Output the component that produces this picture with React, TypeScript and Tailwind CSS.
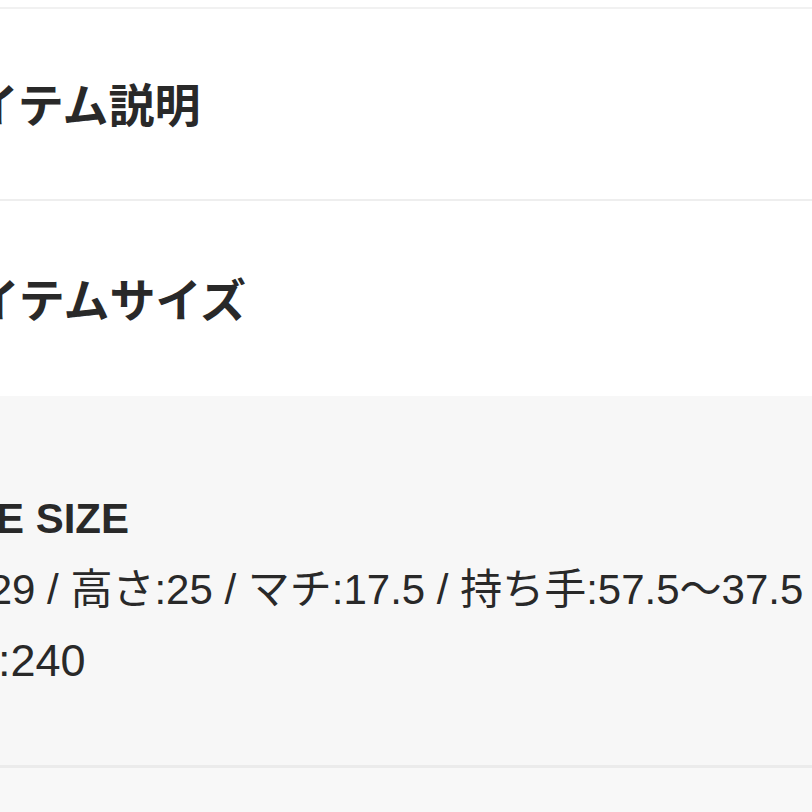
import React from "react";

export default function App() {
  const font = {
    fontFamily: '"Liberation Sans", "Noto Sans CJK JP", sans-serif',
  };
  return (
    <div
      className="w-[812px] h-[812px] overflow-hidden bg-white text-[#292929]"
      style={font}
    >
      <div className="h-[7px] bg-white" />
      <div className="h-[2px] bg-[#f1f1f1]" />
      <section className="h-[190px] flex items-center whitespace-nowrap pt-[4px]">
        <h2 className="ml-[-71px] text-[46px] font-bold leading-none">アイテム説明</h2>
      </section>
      <div className="h-[2px] bg-[#eeeeee]" />
      <section className="h-[195px] flex items-center whitespace-nowrap pt-[4px]">
        <h2 className="ml-[-70px] text-[46px] font-bold leading-none">アイテムサイズ</h2>
      </section>
      <div className="bg-[#f7f7f7] pt-[87px] pb-[69px] whitespace-nowrap">
        <div className="text-[42px] leading-[71px]">
          <p className="ml-[-67px] font-bold">ONE SIZE</p>
          <p className="ml-[-65px]">幅:29 / 高さ:25 / マチ:17.5 / 持ち手:57.5～37.5</p>
          <p className="ml-[-92px] text-[45px]">重さ:240</p>
        </div>
      </div>
      <div className="h-[3px] bg-[#ebebeb]" />
      <div className="h-[60px] bg-[#f8f8f8]" />
    </div>
  );
}
